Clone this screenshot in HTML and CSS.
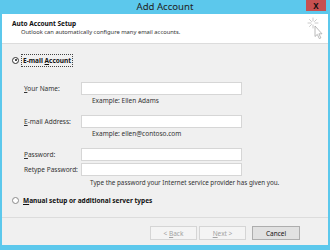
FILE: index.html
```html
<!DOCTYPE html>
<html lang="en">
<head>
    <meta charset="UTF-8">
    <title>Add Account</title>
    <link rel="stylesheet" href="styles.css">
</head>
<body>
    <div class="window">
        <!-- Barre de titre -->
        <div class="titlebar">
            <span></span>
            <span class="title">Add Account</span>
            <span class="close">X</span>
        </div>

        <!-- En-tete blanc -->
        <div class="header">
            <div class="header-text">
                <p class="header-title">Auto Account Setup</p>
                <p class="header-sub">Outlook can automatically configure many email accounts.</p>
            </div>
            <svg class="header-icon" width="16" height="22" viewBox="0 0 16 22">
                <g stroke="#c4c4c4" stroke-width="0.9" stroke-linecap="round">
                    <line x1="6" y1="1" x2="6" y2="4"/>
                    <line x1="6" y1="8" x2="6" y2="11"/>
                    <line x1="1" y1="6" x2="4" y2="6"/>
                    <line x1="8" y1="6" x2="11" y2="6"/>
                    <line x1="2.5" y1="2.5" x2="4.5" y2="4.5"/>
                    <line x1="9.5" y1="2.5" x2="7.5" y2="4.5"/>
                    <line x1="2.5" y1="9.5" x2="4.5" y2="7.5"/>
                </g>
                <path d="M8 9 L8 19.5 L10.3 17.4 L12.3 21.6 L13.9 20.9 L11.9 16.8 L15 16.8 Z" fill="#fff" stroke="#a8a8a8" stroke-width="0.8" stroke-linejoin="round"/>
            </svg>
        </div>

        <!-- Contenu -->
        <div class="content">
            <label class="radio-row">
                <span class="radio checked"></span>
                <span class="radio-label focus">E-mail <u>A</u>ccount</span>
            </label>

            <div class="fields">
                <div class="field">
                    <span class="field-label"><u>Y</u>our Name:</span>
                    <span class="input"></span>
                </div>
                <p class="hint">Example: Ellen Adams</p>

                <div class="field field-email">
                    <span class="field-label"><u>E</u>-mail Address:</span>
                    <span class="input"></span>
                </div>
                <p class="hint">Example: ellen@contoso.com</p>

                <div class="field field-pass">
                    <span class="field-label"><u>P</u>assword:</span>
                    <span class="input"></span>
                </div>
                <div class="field field-retype">
                    <span class="field-label">Retype Password:</span>
                    <span class="input"></span>
                </div>
                <p class="hint hint-pass">Type the password your Internet service provider has given you.</p>
            </div>

            <label class="radio-row radio-manual">
                <span class="radio"></span>
                <span class="radio-label"><u>M</u>anual setup or additional server types</span>
            </label>
        </div>

        <!-- Boutons -->
        <div class="footer">
            <button class="btn" disabled>&lt; <u>B</u>ack</button>
            <button class="btn" disabled><u>N</u>ext &gt;</button>
            <button class="btn btn-cancel">Cancel</button>
        </div>
    </div>
</body>
</html>
```

FILE: styles.css
```css
/* Styles generaux */
body {
    margin: 0;
    padding: 0;
    font-family: "Noto Sans", "Liberation Sans", sans-serif;
    font-size: 6.5px;
    color: #1e1e1e;
}
p {
    margin: 0;
}

/* Fenetre */
.window {
    width: 330px;
    height: 250px;
    box-sizing: border-box;
    padding: 0 2px 5px 2px;
    background-color: #5cc8ec;
    display: flex;
    flex-direction: column;
}
.titlebar {
    height: 14px;
    display: grid;
    grid-template-columns: 1fr auto 1fr;
    align-items: start;
}
.title {
    font-size: 9.6px;
    line-height: 14px;
    color: #222;
}
.close {
    justify-self: end;
    width: 20px;
    height: 11px;
    margin-right: 2px;
    background-color: #c75050;
    color: #111;
    font-size: 8px;
    font-weight: bold;
    line-height: 11px;
    text-align: center;
}

/* En-tete */
.header {
    height: 29px;
    background-color: #fff;
    border-bottom: 1px solid #dcdcdc;
    display: flex;
    justify-content: space-between;
    align-items: flex-start;
}
.header-text {
    padding: 5px 0 0 10px;
    line-height: 9px;
}
.header-title {
    font-weight: bold;
    color: #111;
}
.header-sub {
    padding-left: 9px;
    font-size: 5.8px;
    color: #333;
}
.header-icon {
    margin: 3px 5px 0 0;
}

/* Contenu */
.content {
    flex-grow: 1;
    background-color: #f0f0f0;
    padding: 10px 0 0 10px;
}
.radio-row {
    display: flex;
    align-items: center;
    height: 12px;
}
.radio {
    width: 7px;
    height: 7px;
    box-sizing: border-box;
    border: 1px solid #8a8a8a;
    border-radius: 50%;
    background-color: #fff;
    margin-right: 3px;
    position: relative;
}
.radio.checked {
    border-color: #333;
}
.radio.checked::after {
    content: "";
    position: absolute;
    left: 1.5px;
    top: 1.5px;
    width: 2px;
    height: 2px;
    border-radius: 50%;
    background-color: #111;
}
.radio-label {
    font-weight: bold;
    color: #111;
    padding: 1px 1px;
    line-height: 9px;
}
.radio-label.focus {
    outline: 1px dotted #444;
}
.radio-manual {
    margin-top: 5px;
}

.fields {
    margin-left: 12px;
}
.field {
    display: grid;
    grid-template-columns: 57px 161px;
    align-items: center;
    margin-top: 16px;
}
.field-email,
.field-pass {
    margin-top: 8px;
}
.field-retype {
    margin-top: 2px;
}
.field-label {
    color: #333;
}
.input {
    height: 13px;
    box-sizing: border-box;
    border: 1px solid #d6d6d6;
    background-color: #fff;
}
.hint {
    line-height: 12px;
    padding-left: 68px;
    color: #333;
}
.hint-pass {
    line-height: 13px;
    padding-left: 66px;
    font-size: 6.3px;
}

/* Pied */
.footer {
    height: 28px;
    box-sizing: border-box;
    border-top: 1px solid #dcdcdc;
    background-color: #f0f0f0;
    display: flex;
    justify-content: flex-end;
    align-items: flex-start;
    padding: 8px 28px 0 0;
}
.btn {
    width: 47px;
    height: 14px;
    margin-left: 2px;
    padding: 0;
    font-family: inherit;
    font-size: 6.5px;
    background-color: #f4f4f4;
    border: 1px solid #d5d5d5;
    color: #a3a3a3;
}
.btn-cancel {
    width: 48px;
    margin-left: 6px;
    background-color: #e1e1e1;
    border-color: #adadad;
    color: #111;
}
```
